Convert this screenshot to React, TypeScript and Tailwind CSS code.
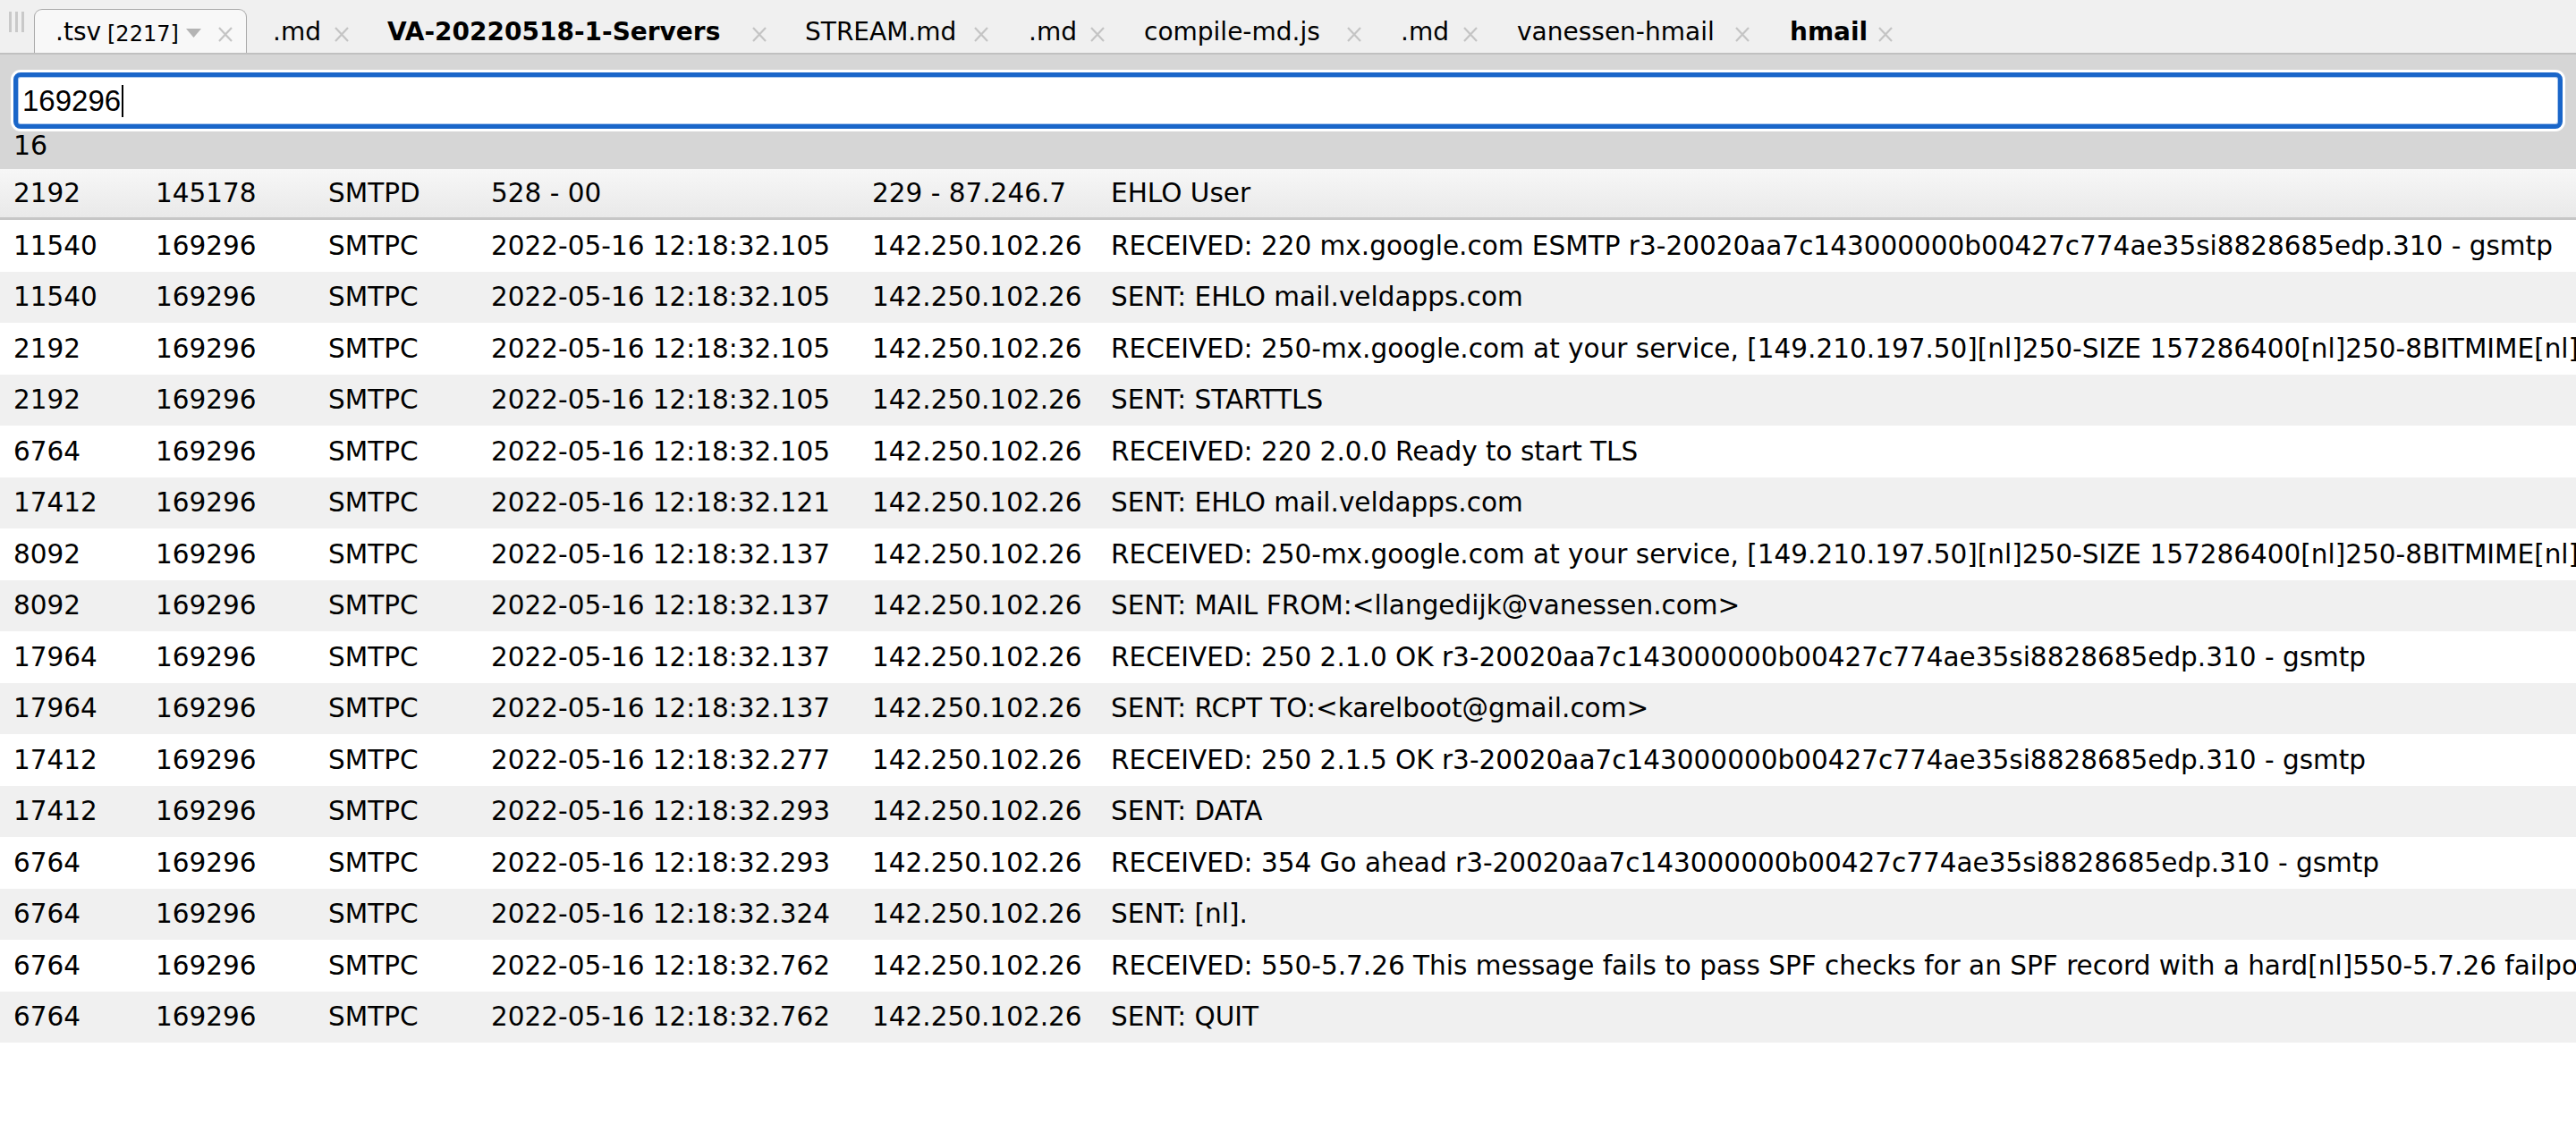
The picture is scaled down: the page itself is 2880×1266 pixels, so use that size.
import React from 'react';

type Tab = {
  label: string;
  bold?: boolean;
  tabW: string;
  slotW: string;
};

const tabs: Tab[] = [
  { label: '.md', tabW: 'w-[128px]', slotW: 'w-[68px]' },
  { label: 'VA-20220518-1-Servers', bold: true, tabW: 'w-[467px]', slotW: 'w-[407px]' },
  { label: 'STREAM.md', tabW: 'w-[250px]', slotW: 'w-[188px]' },
  { label: '.md', tabW: 'w-[129px]', slotW: 'w-[68px]' },
  { label: 'compile-md.js', tabW: 'w-[287px]', slotW: 'w-[226px]' },
  { label: '.md', tabW: 'w-[130px]', slotW: 'w-[69px]' },
  { label: 'vanessen-hmail', tabW: 'w-[305px]', slotW: 'w-[243px]' },
  { label: 'hmail', bold: true, tabW: 'w-[130px]', slotW: 'w-[98px]' },
];

const R3 = 'r3-20020aa7c143000000b00427c774ae35si8828685edp.310 - gsmtp';
const EHLO_REPLY =
  'RECEIVED: 250-mx.google.com at your service, [149.210.197.50][nl]250-SIZE 157286400[nl]250-8BITMIME[nl]250-STARTTLS[nl]250-ENHANCEDSTATUSCODES[nl]250-PIPELINING[nl]250-CHUNKING[nl]250 SMTPUTF8';

type Row = [string, string, string, string, string, string];

const header: Row = ['2192', '145178', 'SMTPD', '528 - 00', '229 - 87.246.7', 'EHLO User'];

const ts = (ms: string) => `2022-05-16 12:18:32.${ms}`;
const IP = '142.250.102.26';

const rows: Row[] = [
  ['11540', '169296', 'SMTPC', ts('105'), IP, `RECEIVED: 220 mx.google.com ESMTP ${R3}`],
  ['11540', '169296', 'SMTPC', ts('105'), IP, 'SENT: EHLO mail.veldapps.com'],
  ['2192', '169296', 'SMTPC', ts('105'), IP, EHLO_REPLY],
  ['2192', '169296', 'SMTPC', ts('105'), IP, 'SENT: STARTTLS'],
  ['6764', '169296', 'SMTPC', ts('105'), IP, 'RECEIVED: 220 2.0.0 Ready to start TLS'],
  ['17412', '169296', 'SMTPC', ts('121'), IP, 'SENT: EHLO mail.veldapps.com'],
  ['8092', '169296', 'SMTPC', ts('137'), IP, EHLO_REPLY],
  ['8092', '169296', 'SMTPC', ts('137'), IP, 'SENT: MAIL FROM:<llangedijk@vanessen.com>'],
  ['17964', '169296', 'SMTPC', ts('137'), IP, `RECEIVED: 250 2.1.0 OK ${R3}`],
  ['17964', '169296', 'SMTPC', ts('137'), IP, 'SENT: RCPT TO:<karelboot@gmail.com>'],
  ['17412', '169296', 'SMTPC', ts('277'), IP, `RECEIVED: 250 2.1.5 OK ${R3}`],
  ['17412', '169296', 'SMTPC', ts('293'), IP, 'SENT: DATA'],
  ['6764', '169296', 'SMTPC', ts('293'), IP, `RECEIVED: 354 Go ahead ${R3}`],
  ['6764', '169296', 'SMTPC', ts('324'), IP, 'SENT: [nl].'],
  [
    '6764',
    '169296',
    'SMTPC',
    ts('762'),
    IP,
    'RECEIVED: 550-5.7.26 This message fails to pass SPF checks for an SPF record with a hard[nl]550-5.7.26 failpolicy (-all). To best protect our users from spam and phishing,',
  ],
  ['6764', '169296', 'SMTPC', ts('762'), IP, 'SENT: QUIT'],
];

const CloseX: React.FC = () => (
  <svg width="18" height="17" viewBox="0 0 18 17" className="mt-[8px] shrink-0">
    <path d="M2 1 L16 16 M16 1 L2 16" stroke="#c4c4c4" strokeWidth="2.2" fill="none" />
  </svg>
);

const TableRow: React.FC<{ row: Row; className: string }> = ({ row, className }) => (
  <div
    className={`grid grid-cols-[159px_193px_182px_426px_267px_1fr] items-center pl-[15px] whitespace-nowrap text-[29.5px] text-black ${className}`}
  >
    {row.map((cell, i) => (
      <span key={i} className={i === 5 ? 'overflow-hidden' : ''}>
        {cell}
      </span>
    ))}
  </div>
);

export default function App() {
  return (
    <div className="min-h-screen w-full overflow-hidden bg-white font-['DejaVu_Sans',sans-serif] text-black">
      {/* tab strip */}
      <div className="flex h-[59px] items-start bg-[#f0f0f0] pl-[10px]">
        <div className="mt-[13px] flex h-[23px] w-[18px] gap-[4px]">
          <span className="w-[3px] bg-[#c9c9c9]" />
          <span className="w-[3px] bg-[#c9c9c9]" />
          <span className="w-[3px] bg-[#c9c9c9]" />
        </div>
        <div className="ml-[10px] mt-[10px] flex h-[49px] w-[238px] items-start rounded-t-[9px] border border-b-0 border-[#a9a9a9] bg-[#f8f8f8] pl-[23px] pt-[11px]">
          <span className="w-[58px] text-[28px] leading-[28px]">.tsv</span>
          <span className="mt-[2px] w-[88px] text-[24px] leading-[28px]">[2217]</span>
          <svg width="17" height="10" viewBox="0 0 17 10" className="mt-[10px] shrink-0">
            <path d="M0 0 H17 L8.5 10 Z" fill="#b4b4b4" />
          </svg>
          <span className="w-[18px]" />
          <CloseX />
        </div>
        <div className="ml-[29px] mt-[10px] flex h-[49px] pt-[12px]">
          {tabs.map((t, i) => (
            <div key={i} className={`flex items-start ${t.tabW}`}>
              <span
                className={`whitespace-nowrap text-[28px] leading-[28px] ${t.slotW} ${t.bold ? 'font-bold' : ''}`}
              >
                {t.label}
              </span>
              <CloseX />
            </div>
          ))}
        </div>
      </div>
      <div className="h-[2px] bg-[#c0c0c0]" />

      {/* search band */}
      <div className="h-[128px] bg-[#d6d6d6] px-[15px] pb-[11px] pt-[20px]">
        <div className="flex h-[63px] items-center rounded-[8px] border-[5px] border-[#1a66c9] bg-white pl-[5px] shadow-[0_0_0_3px_#ffffff,inset_0_0_0_1px_#a9c7ee]">
          <span className="font-['Liberation_Sans',Arial,sans-serif] text-[33px] leading-none">169296</span>
          <span className="ml-[1px] h-[36px] w-[2px] bg-black" />
        </div>
        <div className="mt-[3px] h-[31px] text-[30px] leading-[31px]">16</div>
      </div>

      {/* pinned row */}
      <TableRow
        row={header}
        className="h-[57px] border-b-[3px] border-[#c6c6c6] bg-linear-to-b from-[#f7f7f7] to-[#e9e9e9]"
      />

      {rows.map((r, i) => (
        <TableRow key={i} row={r} className={`h-[57.5px] ${i % 2 === 0 ? 'bg-white' : 'bg-[#f0f0f0]'}`} />
      ))}
    </div>
  );
}
